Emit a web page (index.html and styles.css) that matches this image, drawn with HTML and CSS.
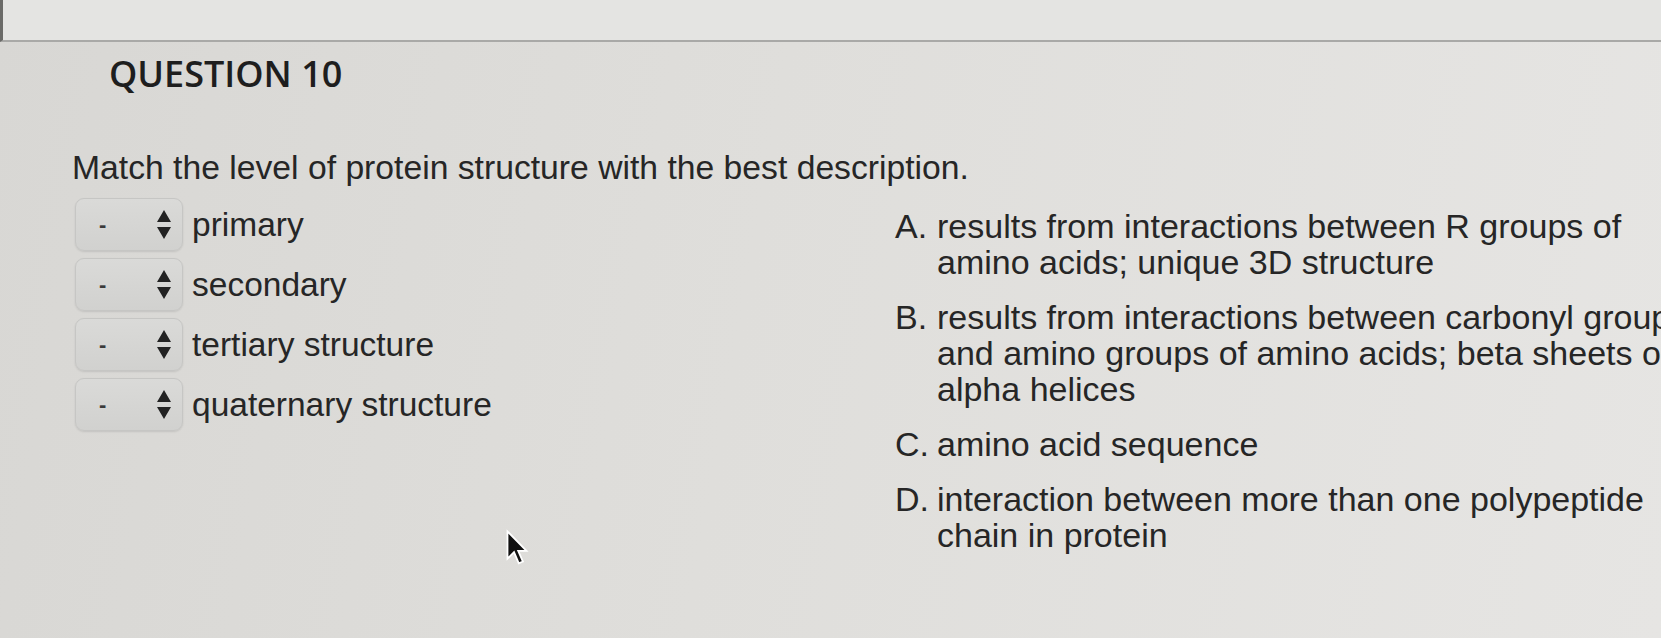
FILE: index.html
```html
<!DOCTYPE html>
<html lang="en">
<head>
    <meta charset="UTF-8">
    <meta name="viewport" content="width=device-width, initial-scale=1.0">
    <title>Question 10</title>
<link rel="stylesheet" href="styles.css">
</head>
<body>
    <div class="topbar"></div>
    <main class="question">
        <h2 class="q-title">QUESTION 10</h2>
        <p class="q-prompt">Match the level of protein structure with the best description.</p>
        <div class="match">
            <ul class="pairs">
                <li class="pair">
                    <span class="pick"><span class="pick-value">-</span>
                        <svg class="pick-arrows" viewBox="0 0 14 29"><path d="M7 0 L14 12 H0 Z M7 29 L14 17 H0 Z"/></svg>
                    </span>
                    <span class="term">primary</span>
                </li>
                <li class="pair">
                    <span class="pick"><span class="pick-value">-</span>
                        <svg class="pick-arrows" viewBox="0 0 14 29"><path d="M7 0 L14 12 H0 Z M7 29 L14 17 H0 Z"/></svg>
                    </span>
                    <span class="term">secondary</span>
                </li>
                <li class="pair">
                    <span class="pick"><span class="pick-value">-</span>
                        <svg class="pick-arrows" viewBox="0 0 14 29"><path d="M7 0 L14 12 H0 Z M7 29 L14 17 H0 Z"/></svg>
                    </span>
                    <span class="term">tertiary structure</span>
                </li>
                <li class="pair">
                    <span class="pick"><span class="pick-value">-</span>
                        <svg class="pick-arrows" viewBox="0 0 14 29"><path d="M7 0 L14 12 H0 Z M7 29 L14 17 H0 Z"/></svg>
                    </span>
                    <span class="term">quaternary structure</span>
                </li>
            </ul>
            <ol class="answers">
                <li class="answer"><span class="answer-key">A.</span><span class="answer-text">results from interactions between R groups of<br>amino acids; unique 3D structure</span></li>
                <li class="answer"><span class="answer-key">B.</span><span class="answer-text">results from interactions between carbonyl groups<br>and amino groups of amino acids; beta sheets or<br>alpha helices</span></li>
                <li class="answer"><span class="answer-key">C.</span><span class="answer-text">amino acid sequence</span></li>
                <li class="answer"><span class="answer-key">D.</span><span class="answer-text">interaction between more than one polypeptide<br>chain in protein</span></li>
            </ol>
        </div>
    </main>
    <svg class="cursor" viewBox="0 0 20 32"><path d="M2 2 V25 L7.5 19.5 L11.5 29 L15 27.5 L11 18.5 H18 Z"/></svg>
</body>
</html>
```

FILE: styles.css
```css
html, body {
  margin: 0;
  height: 100%;
  overflow: hidden;
}
body {
  position: relative;
  font-family: "Liberation Sans", Arial, sans-serif;
  color: #262626;
  background: linear-gradient(100deg, #d8d7d4 0%, #dfdedb 45%, #e6e5e3 100%);
}

.topbar {
  height: 40px;
  border-bottom: 2px solid #a9a9a7;
  border-left: 3px solid #6a6a68;
  background: #e4e4e2;
}

.question {
  padding-left: 72px;
}
.q-title {
  margin: 14px 0 0 37px;
  font-family: "Open Sans", sans-serif;
  font-weight: 600;
  font-size: 36px;
  line-height: 36px;
  color: #1e1e1e;
}
.q-prompt {
  margin: 57px 0 0;
  font-size: 33.7px;
  line-height: 36px;
}

.match {
  display: flex;
  margin-top: 13px;
}

/* left: dropdowns with the term they belong to */
.pairs {
  list-style: none;
  margin: 0;
  padding: 0 0 0 3px;
  width: 823px;
  box-sizing: border-box;
  flex: none;
  display: flex;
  flex-direction: column;
  gap: 7px;
}
.pair {
  display: flex;
  align-items: center;
  gap: 9px;
}
.pick {
  width: 108px;
  height: 53px;
  box-sizing: border-box;
  padding: 0 11px 0 23px;
  display: flex;
  align-items: center;
  justify-content: space-between;
  border-radius: 9px;
  border: 1px solid #c6c6c4;
  background: linear-gradient(#dadad8, #d1d1cf);
  box-shadow: 0 1px 2px rgba(0, 0, 0, 0.1);
}
.pick-value {
  font-size: 22px;
  font-weight: bold;
  color: #3a3a3a;
}
.pick-arrows {
  width: 14px;
  height: 29px;
  fill: #222;
}
.term {
  font-size: 33.5px;
  line-height: 36px;
}

/* right: lettered descriptions */
.answers {
  list-style: none;
  margin: 0;
  padding: 10px 0 0;
  display: flex;
  flex-direction: column;
  gap: 19px;
}
.answer {
  display: flex;
  font-size: 34px;
  line-height: 36px;
  white-space: nowrap;
}
.answer-key {
  width: 42px;
  flex: none;
}

.cursor {
  position: absolute;
  left: 505px;
  top: 529px;
  width: 24px;
  height: 38px;
  fill: #111;
  stroke: #fff;
  stroke-width: 1.5;
}
```
